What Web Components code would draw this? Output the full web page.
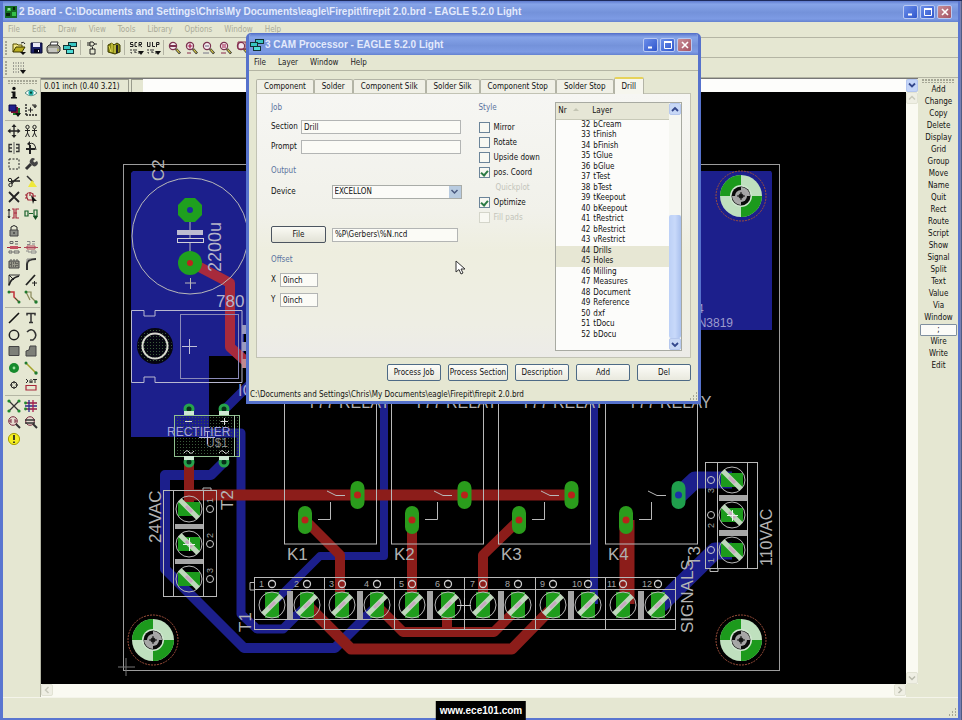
<!DOCTYPE html>
<html lang="en">
<head>
<meta charset="utf-8">
<title>EAGLE 5.2.0 Light</title>
<style>
html,body{height:100%}
body{margin:0;overflow:hidden;background:#3b55b4;color:#111;font:8px/12px "DejaVu Sans Condensed","DejaVu Sans",sans-serif;
--chrome:#e5e7d2;--line:#b4b5a4;--light:#f7f7ec;--title:#7794dc;--frame:#5672cc}
</style>
</head>
<body>
<eagle-desktop></eagle-desktop>
<script>
function define(name, build){
  customElements.define(name, class extends HTMLElement{
    connectedCallback(){
      if(this.shadowRoot) return;
      const t=document.createElement('template');
      t.innerHTML='<style>*{box-sizing:border-box}button,input,select{font:inherit;color:inherit;margin:0;border-radius:0}</style>'+build(this);
      this.attachShadow({mode:'open'}).append(t.content.cloneNode(true));
    }
  });
}

/* ---------- icons: 16 x 14 drawings ---------- */
const K='stroke="#222" fill="none"';
const mag=s=>`<circle cx="6" cy="5" r="3.6" fill="#f4e9ee" stroke="#7b3350" stroke-width="1.2"/><path d="M9 8l4 4.500" stroke="#222" stroke-width="2.600"/><path d="M9.500 8.500l3 3.400" stroke="#d8c94c" stroke-width="1.200"/>${s}`;
const ICON={
board:`<rect x="2" y="1" width="12" height="12" fill="#156b21"/><path d="M4 3h4v3H4zM9 7h4v4H9z" fill="#35c04a"/><path d="M3 8h4v3H3zM10 2h2v3h-2z" fill="#07240b"/><path d="M5 4h2" stroke="#fff"/>`,
cam:`<path d="M6 1h9v5H6z" fill="#133"/><path d="M7 2h7v3H7z" fill="#38c6c2"/><path d="M1 4h8v5H1z" fill="#133"/><path d="M2 5h6v3H2z" fill="#38c6c2"/><path d="M4 8h8v5H4z" fill="#133"/><path d="M5 9h6v3H5z" fill="#4fdcd6"/>`,
open:`<path d="M2 11V3h4l1 1h4v2" fill="#f3e98b" stroke="#554d00"/><path d="M2 11l3-5h9l-3 5z" fill="#b9ae20" stroke="#3b3600"/><path d="M10 2q3-2 4 1" ${K}/><path d="M9 11h6l-3 3z" fill="#111"/>`,
save:`<path d="M3 2h11v10H3z" fill="#1b2168" stroke="#0a0c30"/><path d="M5 2h7v4H5z" fill="#e8e8f4"/><path d="M6 8h6v4H6z" fill="#05061c"/><path d="M10 9h1v2h-1z" fill="#eee"/>`,
print:`<path d="M5 5l1-4h7l-1 4" fill="#fff" stroke="#333"/><path d="M2 6l2-2h9l2 2v4l-2 2H3l-1-2z" fill="#9b9b90" stroke="#333"/><path d="M3 8h9M4 10h8" stroke="#eee"/><path d="M12 9h2" stroke="#cc3"/>`,
gate:`<path d="M6 1h3q3 2 0 4H6zM3 2h3M3 4h3M10 3h3M6 8h5v5H6zM8.500 6v2" ${K}/>`,
book:`<path d="M2 4l4-2 2 2 3-2 3 2v7l-5 2-7-2z" fill="#8c8c14" stroke="#3d3c00"/><path d="M6 2v9M9 4v8M3 5l2 6" stroke="#e6e05a"/><path d="M11 4v8" stroke="#222" stroke-width="2"/>`,
scr:`<path d="M5 1.500H2.500v2H5v2H2M9 1.500H7v4h2M11 5.500v-4h2.500v2H11l3 2.500" ${K}/><path d="M3 8v4h2M5 9h2v3M8 8v4M10 12h2" stroke="#333" fill="none" stroke-dasharray="2 1"/><path d="M10 10h6l-3 4z" fill="#111"/>`,
ulp:`<path d="M2.500 1v4.500H5V1M7.500 1v4.500H10M11.500 6V1.500H14v2h-2" ${K}/><path d="M3 8v4h2M5 9h2v3M8 8v4M10 12h2" stroke="#333" fill="none" stroke-dasharray="2 1"/><path d="M10 10h6l-3 4z" fill="#111"/>`,
zfit:mag('<path d="M3 5h6" stroke="#7b3350" stroke-width="2"/>'),
zin:mag('<path d="M3.500 5h5M6 2.500v5" stroke="#a01848" stroke-width="1.200"/><path d="M3 12h4" stroke="#8a2b4d"/>'),
zout:mag('<path d="M4 5h4" stroke="#667"/><path d="M2 12h6" stroke="#778"/>'),
zre:mag('<path d="M4 4h4M4 6h4" stroke="#a01848"/><path d="M3 12h5" stroke="#8a2b4d"/>'),
zsel:mag('<path d="M3 1h8v7H3z" fill="none" stroke="#8a2b4d"/>'),
grid:`<path d="M2 2h11M2 5h11M2 8h11M2 11h7" stroke="#555" stroke-dasharray="1 1.500"/><path d="M9 9h6l-3 4z" fill="#111"/>`,
info:`<circle cx="8" cy="2.500" r="1.700" fill="#111"/><path d="M5.500 5.500h4V11h1.500v1.500h-6V11h1.500V7h-1z" fill="#111"/>`,
eye:`<path d="M2 7q6-6.500 12 0q-6 5.500-12 0z" fill="#fff" stroke="#5b8f86"/><circle cx="8" cy="6.700" r="2.600" fill="#25b0a8"/><circle cx="8" cy="6.700" r="1.100" fill="#043"/>`,
layers:`<path d="M7 5h7v7H7z" fill="#1d7a27"/><path d="M5 4h7v6H5z" fill="#7b1430"/><path d="M3 2h7v6H3z" fill="#20208c" stroke="#0b0b44"/><path d="M9 10h6l-3 4z" fill="#111"/>`,
mark:`<path d="M3 1v11M3 12h11" stroke="#222" stroke-width="1.400" stroke-dasharray="2 1" fill="none"/><path d="M5 7h5M7.500 4.500v5M9 2h2v2h2V2M12 1v4" ${K}/>`,
move:`<path d="M8 2v10M3 7h10" stroke="#222" stroke-width="1.300"/><path d="M8 0l2.500 3h-5zM8 14l2.500-3h-5zM1.500 7l3-2.500v5zM14.500 7l-3-2.500v5z" fill="#222"/>`,
copy:`<g ${K}><circle cx="4.500" cy="3" r="1.700"/><circle cx="11.500" cy="3" r="1.700"/><path d="M4.500 5v4M2 6.500h5M4.500 9L2.500 13M4.500 9l2 4M11.500 5v4M9 6.500h5M11.500 9l-2 4M11.500 9l2 4"/></g>`,
mirror:`<path d="M6 3.500H3v7h3M3 7h3M10 3.500h3v7h-3M13 7h-3" stroke="#333" stroke-width="1.300" fill="none"/><path d="M8 1v12" stroke="#666"/>`,
rotate:`<path d="M3 8h9M7 4v9" stroke="#222" stroke-width="2"/><path d="M6 3q6-3 7 6" ${K}/><path d="M7 0v5L4 3z" fill="#222"/>`,
group:`<path d="M3 2h10v10H3z" ${K} stroke-dasharray="2 1.500"/>`,
change:`<path d="M3 12l5-5" stroke="#333" stroke-width="3"/><path d="M8 7a3 3 0 0 1 4-5l-2 2 1.500 1.500L14 4a3 3 0 0 1-5 4z" fill="#444"/>`,
cut:`<path d="M13 3L5 9M14 7L5 7" stroke="#222" stroke-width="1.500"/><circle cx="4" cy="6" r="1.700" ${K}/><circle cx="4.500" cy="11" r="1.700" ${K}/><path d="M6 10l3-4" ${K}/>`,
paste:`<path d="M4 2l6 6" stroke="#333" stroke-width="1.500"/><path d="M9 6l5 7H5z" fill="#efe93a"/>`,
del:`<path d="M3 2l10 10M13 2L3 12" stroke="#222" stroke-width="1.800"/>`,
add:`<path d="M2 5h2M2 8h2M4 4q2-3 6 0v6H5q-2-3-1-6M7 2v4M10 6h3" stroke="#a02030" stroke-width="1.200" fill="none"/><path d="M8 5l6 6-3 0-1 3z" fill="#111"/>`,
pins:`<path d="M3 2v9M2 4l1-2 1 2M2 9l1 2 1-2" ${K}/><path d="M6 2h2v9H6M13 2h-3v9h3M8 6h3" stroke="#a8283a" stroke-width="1.200" fill="none"/>`,
gates:`<path d="M2 4h3v5H2zM6 6.500h4M11 3h3v6h-3z" stroke="#17602a" stroke-width="1.200" fill="none"/><path d="M10 9h5l-2.500 4z" fill="#114d20"/>`,
lock:`<path d="M5 6V3q3-3 6 0v3" ${K}/><path d="M4 6h8v6H4z" fill="#8d8f88" stroke="#444"/><path d="M8 8v2" stroke="#222"/>`,
name:`<path d="M4 1.500h3v2H4zM9 1.500h3M9 4h3M3 11h3v2H3zM8 11h5v2H8z" stroke="#666" fill="none"/><path d="M1 7.500h14" stroke="#a8283a"/><path d="M4 6h8v3H4z" fill="#c45060"/>`,
value:`<path d="M4 1.500h3v3H4M9 4h3M9 1.500h3M3 11h3v2M8 11h5v2H8z" stroke="#888" fill="none"/><path d="M1 7.500h14M4 6h8v3H4z" stroke="#b0485a" fill="none"/>`,
smash:`<path d="M3 4h10v7H3z" fill="#99998c" stroke="#444"/><path d="M5 6h6v3H5z" fill="none" stroke="#333" stroke-dasharray="1 1"/><path d="M4 3h8" stroke="#555" stroke-dasharray="2 1"/>`,
miter:`<path d="M4 13V7q0-5 9-5" stroke="#333" stroke-width="2" fill="none"/><path d="M4 5V2h4" stroke="#888" fill="none"/>`,
split:`<path d="M3 13V2h11" stroke="#333" fill="none"/><path d="M3 12Q5 5 13 3" stroke="#222" stroke-width="1.800" fill="none"/><path d="M3 2l5 5" ${K}/>`,
opt:`<path d="M3 12L12 2" stroke="#222" stroke-width="1.800"/><path d="M9 10h5M11.500 8v5" ${K}/>`,
route:`<path d="M3 2h5v5l5 5" stroke="#c0303a" stroke-width="1.500" fill="none"/><circle cx="3" cy="2" r="1.500" fill="#1f7a2f"/><circle cx="13" cy="12" r="1.500" fill="#1f7a2f"/><path d="M9 8l4 4" stroke="#1f7a2f"/>`,
rip:`<path d="M3 2h5v5l5 5M3 2l4 8" stroke="#888858" stroke-width="1.200" fill="none"/><circle cx="3" cy="2" r="1.500" fill="#1f7a2f"/><circle cx="13" cy="12" r="1.700" fill="#1f7a2f"/>`,
wire:`<path d="M3 12L13 2" stroke="#111" stroke-width="1.600"/>`,
text:`<path d="M4 4.500V2.500h8v2M8 2v10M6 11.500h4" stroke="#333" stroke-width="1.500" fill="none"/>`,
circle:`<circle cx="8" cy="7" r="4.700" stroke="#222" stroke-width="1.500" fill="none"/>`,
arc:`<path d="M4 4q4-4 7-1q4 5-1 9H7" stroke="#333" stroke-width="1.600" fill="none"/>`,
rect:`<path d="M3 2.500h10v9H3z" fill="#7d7f78" stroke="#444"/>`,
poly:`<path d="M3 12V7l3-1 1-4h6v10z" fill="#7d7f78" stroke="#444"/>`,
via:`<circle cx="8" cy="7" r="5" fill="#168a2c"/><circle cx="8" cy="7" r="1.400" fill="#9adf9f"/>`,
signal:`<path d="M3 2l10 10" stroke="#a3a32a" stroke-width="1.500"/><circle cx="3" cy="2" r="1.500" fill="#1f7a2f"/><circle cx="13" cy="12" r="1.700" fill="#1f7a2f"/>`,
hole:`<circle cx="8" cy="7" r="3" ${K}/><path d="M8 3v2.500M8 8.500V11M4 7h2.500M9.500 7H12" ${K}/>`,
attr:`<path d="M3 1l2 2-2 2M7 5V2.500l1-1 1 1V5M7 4h2M10 1.500h4M12 1.500V5" ${K}/><path d="M3 7.500h10v4.500H3z" stroke="#a8283a" fill="none" stroke-width="1.200"/>`,
rats:`<path d="M3 2l10 10M13 2L3 12" stroke="#333" stroke-width="1.300"/><g fill="#1f8a2f"><circle cx="3" cy="2" r="1.600"/><circle cx="13" cy="2" r="1.600"/><circle cx="3" cy="12" r="1.600"/><circle cx="13" cy="12" r="1.600"/></g>`,
auto:`<path d="M2 4h12M2 10h12" stroke="#8a1846" stroke-width="1.300"/><path d="M2 7h12M6 1v12" stroke="#2a2a88" stroke-width="1.300"/><path d="M10 1v12" stroke="#b01c50" stroke-width="1.300"/><circle cx="2.500" cy="4" r="1.400" fill="#1f8a2f"/><circle cx="2.500" cy="10" r="1.400" fill="#1f8a2f"/>`,
erc:`<circle cx="7" cy="6" r="4.300" stroke="#7a2c40" fill="#e6dcd0"/><path d="M5 4v4M9 4v4M3 6h2M9 6h2" stroke="#7a2c40"/><path d="M10 9l4 4" stroke="#333" stroke-width="2"/>`,
drc:`<circle cx="7" cy="6" r="4.300" stroke="#7a2c40" fill="#e6dcd0"/><path d="M2 5h10M2 8h10" stroke="#333" stroke-width="1.300"/><path d="M10 9l4 4" stroke="#333" stroke-width="2"/>`,
errors:`<circle cx="8" cy="7" r="5.600" fill="#f4ee22" stroke="#a8a000"/><path d="M8 3v5" stroke="#222" stroke-width="1.700"/><path d="M8 9.500v1.500" stroke="#222" stroke-width="1.700"/>`
};
define('e-icon',el=>`<style>:host{display:block;width:16px;height:14px}svg{display:block}</style><svg width="16" height="14" viewBox="0 0 16 14" aria-hidden="true">${ICON[el.getAttribute('name')]}</svg>`);
define('tool-button',el=>`<style>:host{display:grid;place-items:center;width:17px}button{display:block;border:0;padding:0;background:none}</style><button aria-label="${el.getAttribute('name')}"><e-icon name="${el.getAttribute('name')}"></e-icon></button>`);
const tb=s=>s.split(' ').map(n=>n==='|'?'<i></i>':n==='.'?'<b></b>':`<tool-button name="${n}"></tool-button>`).join('');

/* ---------- window frame pieces ---------- */
define('title-bar',el=>`<style>
:host{display:flex;align-items:center;height:21px;padding:0 6px 0 0;background:linear-gradient(#5f7bcf,#86a4e8 15%,#7492da 55%,#7d9be4 85%,#6482d0);color:#e3eafc;font:bold 10px/14px "Liberation Sans",sans-serif}
span{flex:1;white-space:nowrap;overflow:hidden}
button{width:15px;height:14px;padding:0;border:1px solid #b9c9f2;border-radius:2px;background:linear-gradient(135deg,#6c8fea,#2e55cc);display:grid;place-items:center}
.x{background:linear-gradient(135deg,#c78f98,#a65262)}svg{display:block}div{display:flex;gap:2px}
</style><e-icon name="${el.getAttribute('icon')}"></e-icon><span><slot></slot></span>
<div><button aria-label="Minimize"><svg width="10" height="10"><path d="M2 7.500h4" stroke="#fff" stroke-width="2"/></svg></button>
<button aria-label="Maximize"><svg width="10" height="10"><path d="M1.500 2.500h7v6h-7z" stroke="#fff" fill="none"/><path d="M1 2h8" stroke="#fff" stroke-width="2"/></svg></button>
<button class="x" aria-label="Close"><svg width="10" height="10"><path d="M2 2l6 6M8 2l-6 6" stroke="#fff" stroke-width="1.600"/></svg></button></div>`);
define('menu-bar',el=>`<style>:host{display:flex;align-items:center;height:16px;padding:0 5px;border-bottom:1px solid var(--line);color:var(--menu,#a9aa98);gap:12px;background:var(--chrome)}
button{border:0;padding:0;background:none;line-height:12px}</style>${el.getAttribute('items').split(',').map(t=>`<button>${t}</button>`).join('')}`);
define('tool-row',el=>`<style>:host{display:flex;align-items:center;height:20px;padding-left:2px;border-bottom:1px solid var(--line);background:var(--chrome)}
i{width:1px;height:15px;margin:0 2px;background:var(--line)}u{width:3px;height:14px;margin-right:2px;background:radial-gradient(circle at 1px 1px,#a6a796 1px,transparent 1px) 0 0/3px 3px}</style><u></u>${tb(el.getAttribute('tools'))}`);

define('tool-palette',()=>`<style>
:host{display:flex;flex-direction:column;width:38px;padding:2px 0 0 2px;background:var(--chrome);border-right:1px solid var(--line)}
u{height:4px;margin:0 3px;background:radial-gradient(circle at 1px 1px,#a6a796 1px,transparent 1px) 0 0/3px 3px}
div{display:grid;grid-template-columns:17px 17px;grid-auto-rows:1fr}
.a{height:34px}.b{height:182px}.c{height:83px}.d{height:49px}hr{margin:2px 0;border:0;height:1px;background:var(--line)}
</style><u></u><div class="a">${tb('info eye layers mark')}</div><hr>
<div class="b">${tb('move copy mirror rotate group change cut paste del add pins gates lock . name value smash miter split opt route rip')}</div><hr>
<div class="c">${tb('wire text circle arc rect poly via signal hole attr')}</div><hr>
<div class="d">${tb('rats auto erc drc errors')}</div>`);

define('command-palette',()=>`<style>
:host{display:flex;flex-direction:column;width:39px;padding:1px 1px 0;background:var(--chrome)}
u{height:4px;margin:0 2px 1px;background:radial-gradient(circle at 1px 1px,#a6a796 1px,transparent 1px) 0 0/3px 3px}
button{display:block;height:12px;border:0;padding:0;background:none;text-align:center;line-height:12px}
button.on{background:#fbfbf8;border:1px solid #7f8f9f;line-height:10px;border-radius:1px}
</style><u></u>${'Add,Change,Copy,Delete,Display,Grid,Group,Move,Name,Quit,Rect,Route,Script,Show,Signal,Split,Text,Value,Via,Window,;,Wire,Write,Edit'.split(',').map(t=>`<button${t===';'?' class="on"':''}>${t}</button>`).join('')}`);

define('coord-bar',()=>`<style>
:host{display:flex;height:15px;background:var(--chrome);border-top:1px solid #777}
output{width:88px;padding-left:3px;line-height:13px;border:1px solid #999b8c;border-width:1px 1px 0 0}
span{width:12px;margin-left:2px;border:1px solid #999b8c;border-width:1px 0 0 1px}
input{flex:1;min-width:0;border:0;padding:0 3px;background:#fdfdfb;outline:0}
button{width:12px;border:1px solid #b4c6f0;padding:0;background:#c4d5f8;border-radius:2px}svg{display:block;margin:auto}
</style><output>0.01 inch (0.40 3.21)</output><span></span><input aria-label="Command line"><button aria-label="History"><svg width="8" height="7"><path d="M1 1.500l3 3 3-3" stroke="#33478c" stroke-width="1.800" fill="none"/></svg></button>`);

/* ---------- board drawing, in window coordinates ---------- */
define('board-canvas',()=>{
  const W='stroke="#b9b9b9" fill="none"';
  const R=(x,y,w,h,a=W)=>`<rect x="${x}" y="${y}" width="${w}" height="${h}" ${a}/>`;
  const L=(d,a=W)=>`<path d="${d}" ${a}/>`;
  const tr=(c,w,d)=>L(d,`stroke="${c}" stroke-width="${w}" fill="none" stroke-linejoin="round"`);
  const B='#1c1f8c',RD='#8c1d1a';
  const txt=(x,y,s,t,c='#b4b4b4',r=0)=>`<text x="${x}" y="${y}" font-size="${s}" fill="${c}"${r?` transform="rotate(-90 ${x} ${y})"`:''}>${t}</text>`;
  let s='';
  /* copper, bottom side */
  s+=`<path d="M131 173l2-2h638l1 2v157H244v26h-35v81h-78z" fill="${B}"/>`;
  s+=tr(B,9,'M205 433H241V614L257 629H283L306 606')+tr(B,9,'M252 382L224 410')
   +tr(B,10,'M224 462L211 475H165V569L244 648H335L377 606')+tr(B,8,'M272 604L320 556H384V400')+tr(B,8,'M594 400V604')
   +tr(B,17,'M679 495L695 480H732')+tr(B,17,'M660 605L715 551H732');
  /* copper, top side */
  s+=tr('#a82a3c',10,'M190 262L230 283V347L252 367')
   +tr(RD,10,'M189 462V509')+tr(RD,11,'M184 495H572')+tr(RD,10,'M305 520L340 555V604')+tr(RD,10,'M412 520V604')
   +tr(RD,10,'M519 520L483 555V604')+tr(RD,15,'M627 520V604')+tr(RD,11,'M306 604L351 649H512L554 606')
   +tr(RD,10,'M377 606L403 632H494L519 607')+tr(RD,10,'M447 604V632');
  s+=R(123.5,164.5,656,506,'stroke="#9c9c9c" fill="none"')+L('M118 667H135M126 658V676','stroke="#777" fill="none"');
  /* capacitor */
  s+=`<circle cx="190" cy="236" r="58" ${W}/>`+L('M190 205V265M185 283H196M190.500 278V289')+R(177,230,26,5,'fill="#bcbcd0"')+R(177.5,238.500,26,4,'fill="#1c1f8c" stroke="#d0d0d8"')
   +'<path d="M185 198h10l7 7v10l-7 7h-10l-7-7v-10z" fill="#1fa01f"/><circle cx="190" cy="210" r="3" fill="#1c2f9c"/><circle cx="190" cy="263" r="12" fill="#1fa01f"/><circle cx="190" cy="263" r="3" fill="#c0241c"/>'
   +txt(164,181,17,'C2','#b4b4b4',1)+txt(221,272,18,'2200u','#b4b4c8',1);
  /* regulator */
  s+=L('M131.500 310.500H144V316H155V310.500H242V382.500H155V377H144V382.500H131.500z','stroke="#b8b8d0" fill="none"')+R(180.5,314.500,58,64,'stroke="#8a8ab8" fill="none"')
   +L('M182 346.500H197M189.500 339V354','stroke="#c0c0d8"')+'<circle cx="155" cy="346" r="18" fill="#050510"/><circle cx="155" cy="346" r="17" fill="url(#dots)"/><circle cx="155" cy="346" r="12.500" fill="url(#dots)" stroke="#d8d8d0" stroke-width="2"/>'
   +R(242,325,5,9,'fill="#9a9ac0"')+R(242,342,5,9,'fill="#9a9ac0"')+R(242,359,5,9,'fill="#c08a90"')
   +txt(216,307,17,'780','#b4b4cc')+txt(238,396,16,'IC','#a4a4d0');
  /* rectifier */
  s+=R(174.5,415.500,65,41,'stroke="#8fc08f" fill="url(#dots)"')+L('M234.500 415V456','stroke="#a8c8a8"');
  for(const[x,y]of[[189,409],[224,409],[189,462],[224,462]])s+=`<circle cx="${x}" cy="${y}" r="5.500" fill="#26a34c"/><circle cx="${x}" cy="${y}" r="2.500" fill="#08301a"/><path d="M${x-5} ${y<420?415:456}h10v${y<420?-4:4}h-10z" fill="#cfe8d4"/>`;
  s+=L('M185 421.500H192M220.500 421.500H228M224.500 418V425M184 453q3-4 5-1t5-1M219 453q3-4 5-1t5-1','stroke="#ddd" fill="none"')
   +txt(167,436,12,'RECTIFIER','#a4a4dc')+txt(206,447,12,'U$1','#8c8c8c')+L('M199 437.500H215M207.500 431V444','stroke="#bcbcd8"');
  /* relays */
  for(let i=0;i<4;i++){const o=i*107;
    s+=R(284.5+o,380,92,164)+txt(307+o,408,16,'T77 RELAY','#b0b0b0')+txt(287+o,560,17,'K'+(i+1),'#b0b0b0')
     +L(`M${327+o} 491L${336+o} 495.500H${345+o}M${318+o} 519.500H${330.5+o}V502`,'stroke="#b9b9b9" fill="none"');
    for(const[x,y]of[[305,520],[357.5,495]]){const b=i===3&&y===495;
      s+=`<rect x="${x+o-7}" y="${y-14}" width="14" height="28" rx="7" fill="${b?'#1f9f4c':'#2a9c1c'}"/><circle cx="${x+o}" cy="${y}" r="3.500" fill="${b?'#1c30a8':'#b8221a'}"/>`;}}
  /* terminal strips */
  const term=(x,y,v)=>{const g=v?R(x-11,y-7,22,14,'fill="#1c9a1c"'):R(x-7,y-13,14,26,'fill="#1f9c1c"');
    return g+`<circle cx="${x}" cy="${y}" r="13" ${W}/>`+L(v?`M${x-9} ${y-9}L${x+9} ${y+9}`:`M${x-9} ${y+9}L${x+9} ${y-9}`,'stroke="#bfd8bc" stroke-width="5"')+L(v?`M${x-3} ${y-3}L${x+3} ${y+3}`:`M${x-3} ${y+3}L${x+3} ${y-3}`,'stroke="#c8a8c0" stroke-width="3"')};
  s+=R(254.5,577.500,421,52)+L('M254 589.500H675M254 619.500H675M324.500 577V629M394.500 577V629M464.500 577V629M535.500 577V629M605.500 577V629M254 582.500H250V590H254');
  for(let i=0;i<12;i++){const x=Math.round(272+i*35.1);
    if(i%2===0)s+=R(x+15,591,6,28,'fill="#a6a6a6"');
    s+=term(x,605,0)+`<circle cx="${x}" cy="584" r="3.500" stroke="#ccc" stroke-width="1.300" fill="none"/>`+txt(x-(i>8?16:13),587,9,i+1,'#a8a8a8');}
  s+=L('M457 605.500H471M464.500 598V613','stroke="#ccc"');
  s+=R(163.5,490.500,53,106)+L('M173.500 490V597M203.500 490V597M203 490V488H211V490')+R(175,524,28,5,'fill="#a6a6a6"')+R(175,559,28,5,'fill="#a6a6a6"');
  s+=R(705.5,462.500,52,106)+L('M717.500 462V568M747.500 462V568M710 568V571.500H718V568')+R(719,495,28,6,'fill="#a6a6a6"')+R(719,530,28,6,'fill="#a6a6a6"');
  for(let i=0;i<3;i++){const y=509+i*35,z=480+i*35;
    s+=term(189,y,1)+term(732,z,1)+`<circle cx="210" cy="${y}" r="3.500" stroke="#ccc" fill="none"/><circle cx="711" cy="${z}" r="3.500" stroke="#ccc" fill="none"/>`+txt(213,y-6,9,i+1,'#a8a8a8',1)+txt(714,z+13,9,3-i,'#a8a8a8',1);}
  s+=L('M183 544.500H195M189.500 538V551M727 515.500H738M732.500 510V521','stroke="#e8f4e8"');
  s+=txt(161,543,17,'24VAC','#b4b4b4',1)+txt(233,510,17,'T2','#b4b4b4',1)+txt(251,632,17,'T1','#b4b4b4',1)+txt(693,633,17,'SIGNALS','#b4b4b4',1)+txt(700,566,17,'T3','#b4b4b4',1)+txt(772,566,16,'110VAC','#b4b4b4',1)
   +txt(697,313,12,'4','#9c9ccc')+txt(691,327,12,'2N3819','#9c9ccc');
  /* mounting holes */
  for(const[x,y]of[[153,640],[741,640],[741,196]])s+=`<circle cx="${x}" cy="${y}" r="25" stroke="#a0503c" stroke-dasharray="2 1" fill="none"/><circle cx="${x}" cy="${y}" r="21" fill="#bfe0be"/><path d="M${x} ${y}V${y-21}A21 21 0 0 0 ${x-21} ${y}zM${x} ${y}V${y+21}A21 21 0 0 0 ${x+21} ${y}z" fill="#1c9a1c"/><circle cx="${x}" cy="${y}" r="11" fill="#cfe6cf"/><circle cx="${x}" cy="${y}" r="9.500" fill="#0a0a0a"/><path d="M${x} ${y}V${y-9}A9 9 0 0 1 ${x+9} ${y}zM${x} ${y}V${y+9}A9 9 0 0 1 ${x-9} ${y}z" fill="#a8a8a8"/><circle cx="${x}" cy="${y}" r="6" fill="#a4a4a4"/><circle cx="${x}" cy="${y}" r="2.500" fill="#222"/><path d="M${x-4} ${y}h8M${x} ${y-4}v8" stroke="#111"/>`;
  return `<style>:host{display:block;background:#000;overflow:hidden;min-width:0}svg{display:block;width:100%;height:100%}text{font-family:"Liberation Sans",sans-serif}</style>
<svg role="img" aria-label="Board layout"><defs><pattern id="dots" width="3" height="3" patternUnits="userSpaceOnUse"><path d="M0 0h1v1H0z" fill="#3a5a3a"/></pattern></defs><g transform="translate(-41 -92)">${s}</g></svg>`;
});

define('scroll-strip',el=>{const v=el.hasAttribute('vertical');return `<style>
:host{display:flex;flex-direction:${v?'column':'row'};justify-content:space-between;background:#fafaf2}
button{width:12px;height:12px;padding:0;border:1px solid #e2e3d4;background:#efefe4;display:grid;place-items:center;border-radius:2px}
</style><button aria-label="Scroll back"><svg width="8" height="8"><path d="${v?'M1 5.500l3-3 3 3':'M5.500 1l-3 3 3 3'}" stroke="#c8c9bc" stroke-width="1.500" fill="none"/></svg></button>
<button aria-label="Scroll forward"><svg width="8" height="8"><path d="${v?'M1 2.500l3 3 3-3':'M2.500 1l3 3-3 3'}" stroke="#b8b9ac" stroke-width="1.500" fill="none"/></svg></button>`});

/* ---------- CAM processor dialog ---------- */
define('tab-strip',()=>`<style>:host{display:flex;align-items:flex-end;height:16px}
button{height:14px;border:1px solid #b3b4a6;border-bottom:0;border-radius:2px 2px 0 0;background:#f0f0e6;padding:0 7px;white-space:nowrap;line-height:12px}
button.on{height:17px;margin-bottom:-1px;border-top:2px solid #e6d25a;background:#f6f6ee;z-index:1}</style>
${['Component','Solder','Component Silk','Solder Silk','Component Stop','Solder Stop','Drill'].map(t=>`<button role="tab"${t==='Drill'?' class="on" aria-selected="true"':''}>${t}</button>`).join('')}`);

define('job-form',()=>`<style>
:host{display:grid;grid-template-columns:30px 22px 1fr;grid-template-rows:18px 20px 20px 28px 14px 44px 26px 22px 18px;align-items:center;align-content:start;width:191px;padding-top:5px}
h3{grid-column:1/-1;margin:0;font:inherit;color:#5b73a0}h3.e{align-self:end;line-height:18px}
label{white-space:nowrap}input{width:100%;min-width:0;height:14px;padding:0 2px;border:1px solid #b3b5b4;background:#fbfbf6;outline:0}
.w{grid-column:2/-1;width:160px}.d{grid-column:3;justify-self:end;width:130px;position:relative}
select{appearance:none;display:block;width:100%;height:14px;padding:0 2px;border:1px solid #a9aca8;background:linear-gradient(90deg,#fbfbf8 116px,#b8cbe0 116px)}
.d svg{position:absolute;right:3px;top:3px;pointer-events:none}
.f{grid-column:1/-1;align-self:end;display:grid;grid-template-columns:55px 1fr;gap:6px;width:187px;align-items:center}
button{height:17px;border:1px solid #4c5560;border-radius:2px;background:linear-gradient(#fafaf4,#e2e2d6);padding:0}
.o{grid-column:1/-1;display:grid;grid-template-columns:9px 38px;align-items:center}
</style>
<h3>Job</h3>
<label for="s">Section</label><input class="w" id="s" value="Drill">
<label for="p">Prompt</label><input class="w" id="p">
<h3>Output</h3>
<label for="d">Device</label><div class="d"><select id="d"><option>EXCELLON</option></select><svg width="9" height="8"><path d="M1.500 2l3 3 3-3" stroke="#4a5a80" stroke-width="1.500" fill="none"/></svg></div>
<div class="f"><button>File</button><input aria-label="File" value="%P\\Gerbers\\%N.ncd"></div>
<h3 class="e">Offset</h3>
<div class="o"><label for="x">X</label><input id="x" value="0inch"></div>
<div class="o"><label for="y">Y</label><input id="y" value="0inch"></div>`);

define('style-options',()=>`<style>
:host{display:flex;flex-direction:column;width:77px;padding-top:7px}
h3{margin:0 0 6px;font:inherit;line-height:13px;color:#5b73a0}
label{display:flex;align-items:center;gap:4px;height:15px;white-space:nowrap}
label.off{color:#c3c4ba}
input{appearance:none;width:11px;height:11px;border:1px solid #6b8499;background:#f8f8f2;display:grid;place-items:center}
input:checked::after{content:"";width:3px;height:5px;border:solid #2c7a44;border-width:0 2px 2px 0;transform:rotate(40deg)}
.off input{border-color:#d4d5ca}.sub{padding-left:17px}.sub input{display:none}
</style><h3>Style</h3>
<label><input type="checkbox">Mirror</label><label><input type="checkbox">Rotate</label><label><input type="checkbox">Upside down</label><label><input type="checkbox" checked>pos. Coord</label>
<label class="off sub"><input type="checkbox" disabled>Quickplot</label><label><input type="checkbox" checked>Optimize</label><label class="off"><input type="checkbox" disabled>Fill pads</label>`);

define('layer-list',()=>`<style>
:host{display:flex;width:127px;height:249px;border:1px solid #a8aaa2;background:#fcfcfa}
.l{flex:1;min-width:0}table{width:100%;border-collapse:collapse;table-layout:fixed}
th{font-weight:normal;text-align:left;height:16px;padding:0 0 0 2px;background:#e6e6d6;border-bottom:1px solid #c8c9b8}
th:first-child{width:34px}td{padding:0 0 0 2px;height:10px;line-height:10px}td:first-child{text-align:right;padding:0}tr:nth-child(even) td{height:11px}
td+td{padding-left:3px}tr.on td{background:#e7e7d4}
th svg{margin-left:5px}
.s{width:12px;display:flex;flex-direction:column;background:#f6f7f2}
button{height:12px;border:1px solid #b6c8ee;background:#c8d8f6;padding:0;display:grid;place-items:center;border-radius:2px}
.t{flex:1;display:flex;flex-direction:column}.t i{flex:100}.t b{flex:122;background:linear-gradient(90deg,#bcd0f6,#c8d9fa 50%,#a9c0ee);border-radius:2px}
</style><div class="l"><table><thead><tr><th>Nr<svg width="8" height="6"><path d="M1 4l3-3 3 3z" fill="#c4c5b4"/></svg></th><th>Layer</th></tr></thead><tbody>
${'bCream,tFinish,bFinish,tGlue,bGlue,tTest,bTest,tKeepout,bKeepout,tRestrict,bRestrict,vRestrict,Drills,Holes,Milling,Measures,Document,Reference,dxf,tDocu,bDocu'.split(',').map((n,i)=>`<tr${i===12||i===13?' class="on"':''}><td>${i+32}</td><td>${n}</td></tr>`).join('')}</tbody></table></div>
<div class="s"><button aria-label="Up"><svg width="8" height="7"><path d="M1 5l3-3 3 3" stroke="#33478c" stroke-width="1.800" fill="none"/></svg></button><div class="t"><i></i><b></b></div><button aria-label="Down"><svg width="8" height="7"><path d="M1 2l3 3 3-3" stroke="#33478c" stroke-width="1.800" fill="none"/></svg></button></div>`);

define('cam-dialog',()=>`<style>
:host{display:flex;flex-direction:column;width:455px;border:solid var(--frame);border-width:1px 3px 3px;border-radius:5px 5px 0 0;overflow:hidden;background:var(--chrome);--menu:#222}
main{display:flex;flex-direction:column;padding:6px 7px 0 7px}
.p{display:flex;height:265px;padding:0 8px 0 14px;border:1px solid #c2c3b4;background:linear-gradient(#f6f6f3,#f1f1ea 45%,#eeeedf 60%,#eeeee4 88%,#ecebe8)}
.p job-form{margin-right:17px}.p layer-list{margin:8px 0 0 auto}
.b{display:flex;justify-content:flex-end;gap:7px;padding:6px 0 7px}
.b button{width:54px;height:17px;padding:0;white-space:nowrap;border:1px solid #4d6a86;border-radius:2px;background:linear-gradient(#fcfcf8,#e9e9de)}
.b button:nth-child(2){width:60px}
footer{height:13px;line-height:13px;padding-left:1px;display:flex;justify-content:space-between}
footer svg{align-self:end}
svg.m{position:absolute;left:206px;top:226px}
</style><title-bar icon="cam">3 CAM Processor - EAGLE 5.2.0 Light</title-bar><menu-bar items="File,Layer,Window,Help"></menu-bar>
<main><tab-strip></tab-strip><div class="p"><job-form></job-form><style-options></style-options><layer-list></layer-list></div>
<div class="b"><button>Process Job</button><button>Process Section</button><button>Description</button><button>Add</button><button>Del</button></div></main>
<footer><span>C:\\Documents and Settings\\Chris\\My Documents\\eagle\\Firepit\\firepit 2.0.brd</span><svg width="9" height="9"><path d="M7 1h1M4 4h1M7 4h1M1 7h1M4 7h1M7 7h1" stroke="#a6a796" stroke-width="2"/></svg></footer>
<svg class="m" width="12" height="16" aria-hidden="true"><path d="M1 1v11l3-2.500L6 14l2-1-2-4h4z" fill="#fff" stroke="#333"/></svg>`);

define('eagle-desktop',()=>`<style>
:host{display:flex;flex-direction:column;height:100%;position:relative;background:linear-gradient(90deg,#8b8fc8,#3c4a6a) right/2px 100% no-repeat,var(--chrome);border-top:1px solid #1e2b5c}
.win{flex:1;min-height:0;display:flex;flex-direction:column;margin-right:2px;border:solid #5a76d0;border-width:0 2px 3px 3px;background:var(--chrome)}
.mid{flex:1;min-height:0;display:flex}
.c{flex:1;min-width:0;display:grid;grid-template:14px 1fr 13px/1fr 12px}
coord-bar{grid-column:1/-1}
command-palette{margin-left:1px}
footer{height:21px;border-top:1px solid #f4f4ea;display:flex;justify-content:flex-end;align-items:end;padding:1px}
cam-dialog{position:absolute;left:246px;top:32px}
a{position:absolute;bottom:0;left:50%;transform:translateX(-50%);padding:3px 4px;height:20px;background:#000;color:#fff;font:bold 10px/14px "Liberation Sans",sans-serif;text-decoration:none}
coord-bar{height:14px}
</style>
<div class="win"><title-bar icon="board">2 Board - C:\\Documents and Settings\\Chris\\My Documents\\eagle\\Firepit\\firepit 2.0.brd - EAGLE 5.2.0 Light</title-bar>
<menu-bar items="File,Edit,Draw,View,Tools,Library,Options,Window,Help"></menu-bar>
<tool-row tools="open save print cam | gate | book | scr ulp | zfit zin zout zre zsel"></tool-row>
<tool-row tools="grid"></tool-row>
<div class="mid"><tool-palette></tool-palette><div class="c"><coord-bar></coord-bar><board-canvas></board-canvas><scroll-strip vertical></scroll-strip><scroll-strip></scroll-strip></div><command-palette></command-palette></div>
<footer><svg width="9" height="9"><path d="M7 1h1M4 4h1M7 4h1M1 7h1M4 7h1M7 7h1" stroke="#a6a796" stroke-width="2"/></svg></footer></div>
<cam-dialog></cam-dialog><a href="#">www.ece101.com</a>`);
</script>
</body>
</html>
